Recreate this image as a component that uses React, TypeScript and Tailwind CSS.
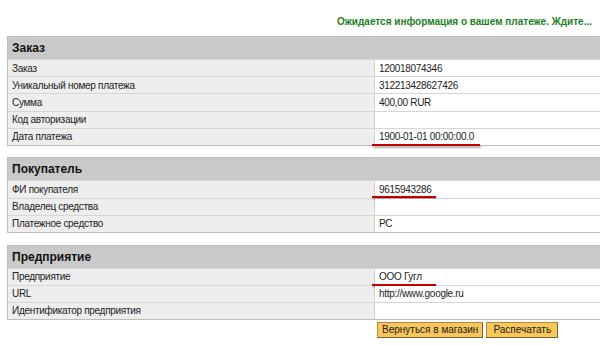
import React from 'react';

type Row = { label: string; value: string; mark?: number };

const sections: { title: string; rows: Row[] }[] = [
  {
    title: 'Заказ',
    rows: [
      { label: 'Заказ', value: '120018074346' },
      { label: 'Уникальный номер платежа', value: '312213428627426' },
      { label: 'Сумма', value: '400,00 RUR' },
      { label: 'Код авторизации', value: '' },
      { label: 'Дата платежа', value: '1900-01-01 00:00:00.0', mark: 108 },
    ],
  },
  {
    title: 'Покупатель',
    rows: [
      { label: 'ФИ покупателя', value: '9615943286', mark: 64 },
      { label: 'Владелец средства', value: '' },
      { label: 'Платежное средство', value: 'PC' },
    ],
  },
  {
    title: 'Предприятие',
    rows: [
      { label: 'Предприятие', value: 'ООО Гугл', mark: 64 },
      { label: 'URL', value: 'http://www.google.ru' },
      { label: 'Идентификатор предприятия', value: '' },
    ],
  },
];

function Section({ title, rows }: { title: string; rows: Row[] }) {
  return (
    <div className="border border-[#bdbdbd] border-r-0">
      <div className="h-[22px] bg-[#c9c9c9] pl-[4px] flex items-center text-[12px] font-bold text-[#111]">
        {title}
      </div>
      {rows.map((r) => (
        <div key={r.label} className="grid grid-cols-[367px_1fr] h-[17.2px] border-t border-[#d6d6d6] text-[10px] tracking-[-0.3px] text-[#222]">
          <div className="bg-[#eeeeee] border-r border-[#d0d0d0] pl-[4px] flex items-center">
            {r.label}
          </div>
          <div className="relative bg-white pl-[4px] flex items-center">
            {r.value}
            {r.mark && (
              <span
                className="absolute left-[-3px] top-[15px] h-[2px] bg-[#c00000] shadow-[1px_2px_2px_rgba(0,0,0,0.35)]"
                style={{ width: r.mark }}
              />
            )}
          </div>
        </div>
      ))}
    </div>
  );
}

export default function App() {
  return (
    <div className="w-[600px] h-[345px] bg-white overflow-hidden font-['Liberation_Sans',Arial,sans-serif]">
      <div className="h-[36px] flex items-center justify-end pr-[8px] pt-[6px]">
        <span className="text-[10px] font-bold text-[#1d7f1d]">
          Ожидается информация о вашем платеже. Ждите...
        </span>
      </div>
      <div className="pl-[7px] flex flex-col gap-[11.5px]">
        {sections.map((s) => (
          <Section key={s.title} title={s.title} rows={s.rows} />
        ))}
      </div>
      <div className="pl-[377px] pt-[1.5px] flex gap-[3px]">
        <button className="h-[16px] px-[4px] bg-[#f9c65a] border border-[#b08a3a] border-r-[#7a6028] border-b-[#7a6028] text-[10px] leading-none text-[#222]">
          Вернуться в магазин
        </button>
        <button className="h-[16px] px-[6px] bg-[#f9c65a] border border-[#b08a3a] border-r-[#7a6028] border-b-[#7a6028] text-[10px] leading-none text-[#222]">
          Распечатать
        </button>
      </div>
    </div>
  );
}
